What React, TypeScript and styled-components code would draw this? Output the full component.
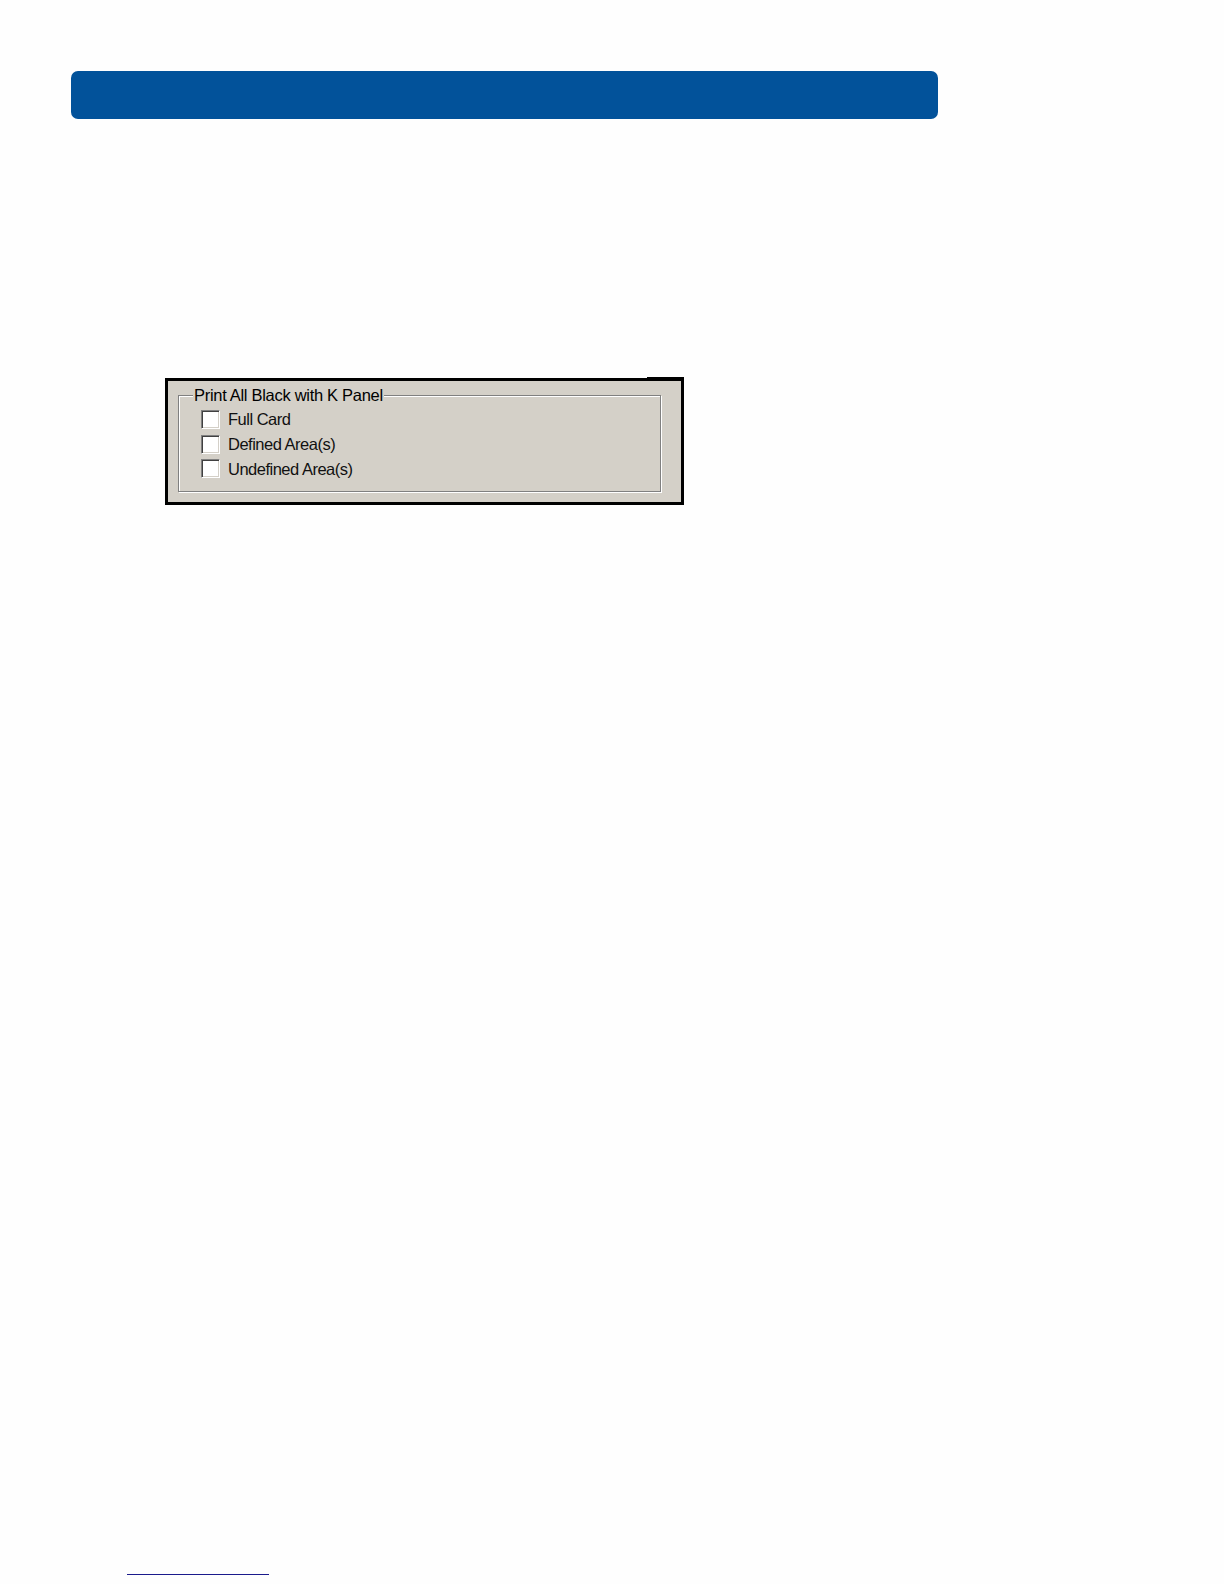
import React from 'react';
import styled, { createGlobalStyle } from 'styled-components';

const GlobalStyle = createGlobalStyle`
	html, body {
		margin: 0;
		padding: 0;
		background: #fefefe;
	}
	body {
		font-family: "Liberation Sans", Arial, sans-serif;
	}
`;

const options = ['Full Card', 'Defined Area(s)', 'Undefined Area(s)'];

const App = () => {
	return (
		<Page>
			<GlobalStyle />
			<HeaderBar />
			<Dialog>
				<GroupBox>
					<Legend>Print All Black with K Panel</Legend>
					<OptionList>
						{options.map((label) => (
							<OptionRow key={label}>
								<CheckBox />
								<OptionLabel>{label}</OptionLabel>
							</OptionRow>
						))}
					</OptionList>
				</GroupBox>
			</Dialog>
			<FooterRule />
		</Page>
	);
};

const Page = styled.div`
	width: 1224px;
	height: 1584px;
	box-sizing: border-box;
	padding-top: 71px;
	display: flex;
	flex-direction: column;
`;

const HeaderBar = styled.div`
	margin-left: 71px;
	width: 867px;
	height: 48px;
	border-radius: 7px;
	background: #02529a;
`;

const Dialog = styled.div`
	position: relative;
	margin-top: 259px;
	margin-left: 165px;
	width: 519px;
	height: 127px;
	box-sizing: border-box;
	border: 3px solid #000;
	background: #d4d0c8;
	padding: 5px 20px 10px 10px;

	&::after {
		content: '';
		position: absolute;
		top: -4px;
		right: -3px;
		width: 37px;
		height: 2px;
		background: #000;
	}
`;

const GroupBox = styled.fieldset`
	margin: 0;
	height: 100%;
	box-sizing: border-box;
	border: 1px solid #808080;
	box-shadow: inset 1px 1px 0 #fff, 1px 1px 0 #fff;
	padding: 0;
	min-width: 0;
`;

const Legend = styled.legend`
	margin-left: 14px;
	padding: 0 1px;
	background: #d4d0c8;
	font-size: 16.5px;
	line-height: 18px;
	letter-spacing: -0.3px;
	color: #000;
`;

const OptionList = styled.div`
	display: flex;
	flex-direction: column;
	padding: 3px 0 0 22px;
`;

const OptionRow = styled.div`
	display: flex;
	align-items: center;
	height: 24.7px;
	gap: 8px;
`;

const CheckBox = styled.span`
	width: 19px;
	height: 19px;
	box-sizing: border-box;
	flex-shrink: 0;
	background: #fff;
	border-top: 1px solid #808080;
	border-left: 1px solid #808080;
	border-right: 1px solid #fff;
	border-bottom: 1px solid #fff;
	box-shadow: inset 1px 1px 0 #404040, inset -1px -1px 0 #d4d0c8;
`;

const OptionLabel = styled.span`
	font-size: 16.5px;
	line-height: 18px;
	letter-spacing: -0.5px;
	color: #111;
`;

const FooterRule = styled.div`
	margin-top: auto;
	margin-bottom: 9px;
	margin-left: 127px;
	width: 142px;
	height: 1px;
	background: #1b1b8c;
`;

export default App;
